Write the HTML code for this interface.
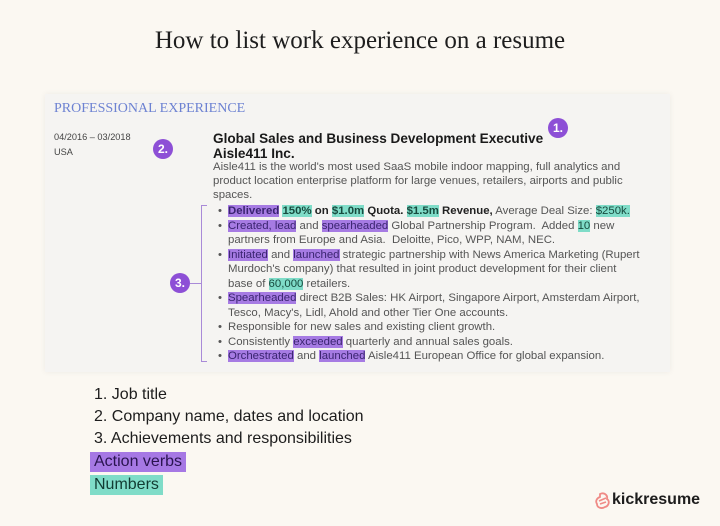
<!DOCTYPE html>
<html><head><meta charset="utf-8"><style>
*{margin:0;padding:0;box-sizing:border-box}
body{width:720px;height:526px;background:#fbf8f2;font-family:"Liberation Sans",sans-serif;position:relative;overflow:hidden;color:#222}
.a{position:absolute;white-space:nowrap}
h1{position:absolute;left:0;width:720px;top:27px;text-align:center;font-family:"Liberation Serif",serif;font-weight:normal;font-size:25px;color:#1e1e1e}
.card{position:absolute;left:45px;top:94px;width:625px;height:278px;background:#f5f4f2;box-shadow:0 0 6px rgba(0,0,0,.06)}
.b{position:absolute;width:20px;height:20px;border-radius:50%;background:#8d4fd6;color:#fff;font-weight:bold;font-size:12px;text-align:center;line-height:20px}
.p{background:#a67be3;color:#3a2470}
.t{background:#7fdcc8;color:#174a3e}
.li{position:absolute;left:219px;font-size:11.4px;color:#555;white-space:nowrap;line-height:14.5px}
.li::before{content:"•";position:absolute;left:-1px}
.li span.x{position:absolute;left:9px}
.bl{position:absolute;left:94px;font-size:16px;color:#1d1d1d}
</style></head><body>
<h1>How to list work experience on a resume</h1>
<div class="card"></div>
<div class="a" style="left:54px;top:101px;font-family:'Liberation Serif',serif;font-size:14px;color:#6d82d2">PROFESSIONAL EXPERIENCE</div>
<div class="a" style="left:54px;top:132px;font-size:9.2px;color:#444">04/2016 – 03/2018</div>
<div class="a" style="left:54px;top:147px;font-size:9.2px;color:#444">USA</div>
<div class="b" style="left:153px;top:139px">2.</div>
<div class="b" style="left:548px;top:118px">1.</div>
<div class="a" style="left:213px;top:131px;font-size:13.6px;font-weight:bold;color:#1a1a1a">Global Sales and Business Development Executive</div>
<div class="a" style="left:213px;top:146px;font-size:13.6px;font-weight:bold;color:#1a1a1a">Aisle411 Inc.</div>
<div class="a" style="left:213px;top:160px;font-size:11.4px;color:#555;line-height:14.2px">Aisle411 is the world's most used SaaS mobile indoor mapping, full analytics and<br>product location enterprise platform for large venues, retailers, airports and public<br>spaces.</div>
<div style="position:absolute;left:201px;top:205px;width:6px;height:157px;border:1px solid #a98ad8;border-right:none"></div>
<div style="position:absolute;left:190px;top:283px;width:11px;border-top:1px solid #a98ad8"></div>
<div class="b" style="left:170px;top:273px">3.</div>
<div class="li" style="top:204px"><span class="x"><b style="color:#222"><span class="p">Delivered</span> <span class="t">150%</span> on <span class="t">$1.0m</span> Quota. <span class="t">$1.5m</span> Revenue,</b> Average Deal Size: <span class="t">$250k.</span></span></div>
<div class="li" style="top:218.5px"><span class="x"><span class="p">Created, lead</span> and <span class="p">spearheaded</span> Global Partnership Program.&nbsp; Added <span class="t">10</span> new<br>partners from Europe and Asia.&nbsp; Deloitte, Pico, WPP, NAM, NEC.</span></div>
<div class="li" style="top:247.5px"><span class="x"><span class="p">Initiated</span> and <span class="p">launched</span> strategic partnership with News America Marketing (Rupert<br>Murdoch's company) that resulted in joint product development for their client<br>base of <span class="t">60,000</span> retailers.</span></div>
<div class="li" style="top:291px"><span class="x"><span class="p">Spearheaded</span> direct B2B Sales: HK Airport, Singapore Airport, Amsterdam Airport,<br>Tesco, Macy's, Lidl, Ahold and other Tier One accounts.</span></div>
<div class="li" style="top:320px"><span class="x">Responsible for new sales and existing client growth.</span></div>
<div class="li" style="top:334.5px"><span class="x">Consistently <span class="p">exceeded</span> quarterly and annual sales goals.</span></div>
<div class="li" style="top:349px"><span class="x"><span class="p">Orchestrated</span> and <span class="p">launched</span> Aisle411 European Office for global expansion.</span></div>
<div class="bl a" style="top:386px">1. Job title</div>
<div class="bl a" style="top:408px">2. Company name, dates and location</div>
<div class="bl a" style="top:430px">3. Achievements and responsibilities</div>
<div class="bl a" style="top:452px;left:90px;padding:1px 4px;background:#a678e4;color:#2a1450">Action verbs</div>
<div class="bl a" style="top:475px;left:90px;padding:1px 4px;background:#7fdcc8;color:#123c33">Numbers</div>
<svg class="a" style="left:595px;top:492px" width="16" height="18" viewBox="0 0 16 18"><path d="M5 2c4-2 8 1 7 5 3 2 2 7-2 8-3 2-8 1-8-3-2-3 0-6 3-7z" fill="none" stroke="#ef8a86" stroke-width="1.8"/><path d="M4 9l7-3M5 12l6-2" stroke="#ef8a86" stroke-width="1.5"/></svg>
<div class="a" style="left:612px;top:491px;font-size:16px;font-weight:bold;color:#1d1d1d">kickresume</div>
</body></html>
